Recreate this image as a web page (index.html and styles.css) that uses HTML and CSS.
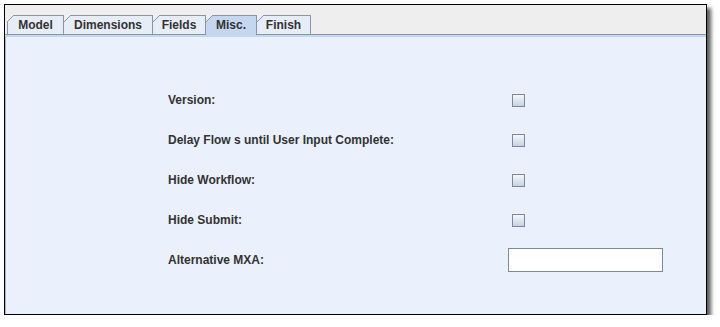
FILE: index.html
```html
<!DOCTYPE html>
<html>
<head>
<meta charset="utf-8">
<link rel="stylesheet" href="styles.css">
</head>
<body>
<div class="frame">
  <div class="tabstrip">
    <div class="tab first w-model">Model</div>
    <div class="tab w-dim">Dimensions</div>
    <div class="tab w-fields">Fields</div>
    <div class="tab selected w-misc">Misc.</div>
    <div class="tab w-finish">Finish</div>
  </div>
  <div class="band"></div>
  <div class="content">
    <div class="form">
      <div class="label">Version:</div>
      <div class="cell"><span class="check"></span></div>
      <div class="label">Delay Flow s until User Input Complete:</div>
      <div class="cell"><span class="check"></span></div>
      <div class="label">Hide Workflow:</div>
      <div class="cell"><span class="check"></span></div>
      <div class="label">Hide Submit:</div>
      <div class="cell"><span class="check"></span></div>
      <div class="label">Alternative MXA:</div>
      <div class="cell"><span class="field"></span></div>
    </div>
  </div>
</div>
</body>
</html>
```
FILE: styles.css
```css
html, body {
  margin: 0;
  padding: 0;
  background: #ffffff;
}
body {
  font-family: "Liberation Sans", Arial, sans-serif;
  font-size: 12px;
  color: #333333;
}
.frame {
  margin: 4px 0 0 4px;
  width: 701px;
  height: 309px;
  border: 1px solid #000000;
  box-shadow: 4px 4px 4px rgba(0, 0, 0, 0.65);
  display: flex;
  flex-direction: column;
  background: #eaf1fc;
}
.tabstrip {
  height: 29px;
  background: #eeeeee;
  border-bottom: 1px solid #8796b0;
  display: flex;
  align-items: flex-end;
  padding-left: 2px;
}
.tab {
  position: relative;
  height: 18px;
  line-height: 18px;
  text-align: center;
  border-top: 1px solid #8796b0;
  border-right: 1px solid #8796b0;
  background: #e6edf7;
  font-weight: bold;
  color: #333333;
  white-space: nowrap;
}
.w-model { width: 55px; }
.w-dim { width: 88px; }
.w-fields { width: 52px; }
.w-misc { width: 50px; }
.w-finish { width: 53px; }
.tab.first {
  border-left: 1px solid #8796b0;
}
.tab::before {
  content: "";
  position: absolute;
  top: -1px;
  left: 0;
  width: 7px;
  height: 7px;
  background: linear-gradient(to bottom right, #eeeeee calc(50% - 0.7px), #8796b0 calc(50% - 0.7px), #8796b0 calc(50% + 0.7px), transparent calc(50% + 0.7px));
}
.tab.first::before {
  left: -1px;
}
.tab.selected {
  background: #c4d7ef;
  height: 19px;
  margin-bottom: -1px;
}
.band {
  height: 2px;
  background: #c4d7ef;
}
.content {
  flex: 1;
  border-left: 1px solid #a9b7cc;
  padding-top: 43px;
}
.form {
  display: grid;
  grid-template-columns: 340px 160px;
  grid-auto-rows: 40px;
  align-items: center;
  margin-left: 162px;
}
.label {
  font-weight: bold;
  color: #333333;
}
.cell {
  display: flex;
  align-items: center;
}
.check {
  display: block;
  width: 11px;
  height: 11px;
  margin-left: 4px;
  border: 1px solid #7d8797;
  background: linear-gradient(#f6f8fb, #c7d2e2);
}
.field {
  display: block;
  width: 153px;
  height: 22px;
  border: 1px solid #7f8a94;
  background: #ffffff;
}
```
